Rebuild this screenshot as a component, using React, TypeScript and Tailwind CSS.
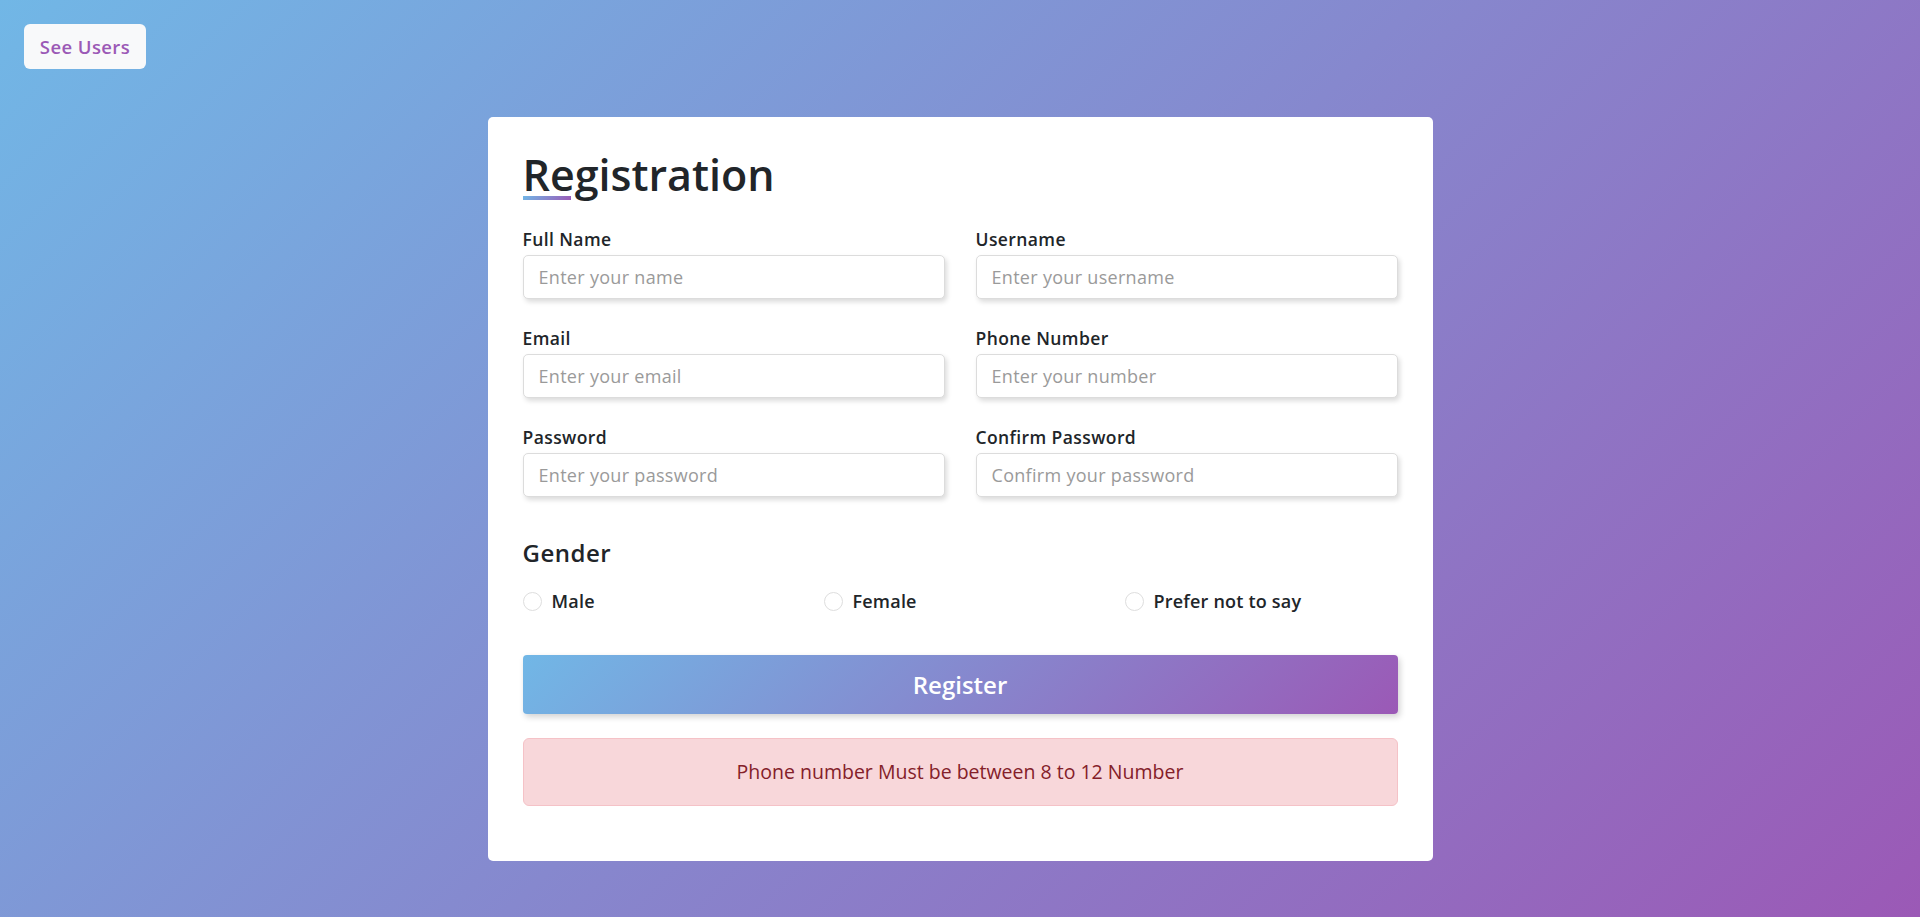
import React from "react";

const font = { fontFamily: '"Open Sans", "Noto Sans", sans-serif' };

function Field({ label, placeholder }: { label: string; placeholder: string }) {
  return (
    <div className="mb-[28px] flex flex-col">
      <label className="mb-[5px] block h-[22px] text-[17.5px] font-semibold leading-[22px] tracking-[0.4px] text-[#212529]">
        {label}
      </label>
      <input
        className="h-[44px] w-full rounded-[5px] border border-[#dcdcdc] bg-white pl-[15px] text-[18px] tracking-[0.3px] text-[#212529] shadow-[2px_3px_5px_rgba(0,0,0,0.14)] outline-none placeholder:text-[#9a9a9a]"
        placeholder={placeholder}
      />
    </div>
  );
}

function Radio({ label }: { label: string }) {
  return (
    <label className="flex h-[24px] items-center">
      <span className="mr-[10px] inline-block h-[19px] w-[19px] rounded-full border border-[#dedede] bg-white" />
      <span className="text-[18px] font-semibold leading-[24px] tracking-[0.2px] text-[#212529]">{label}</span>
    </label>
  );
}

export default function App() {
  return (
    <div
      className="min-h-screen w-full bg-[linear-gradient(135deg,#71b7e6,#9b59b6)] pt-[24px]"
      style={font}
    >
      <div className="pl-[24px]">
        <button className="flex h-[45px] w-[122px] items-center justify-center rounded-[6px] bg-[#f8f9fa] text-[18.5px] font-semibold tracking-[0.4px] text-[#9b59b6]">
          See Users
        </button>
      </div>
      <div className="mx-auto mt-[48px] w-[945px] rounded-[5px] bg-white px-[35px] pb-[55px] pt-[35px]">
        <div className="relative mb-[31px] h-[45px]">
          <h1 className="text-[43px] font-semibold leading-[45px] text-[#212529]">Registration</h1>
          <div className="absolute left-0 top-[44px] h-[4px] w-[48px] bg-[linear-gradient(135deg,#71b7e6,#9b59b6)]" />
        </div>
        <div className="grid grid-cols-2 gap-x-[31px]">
          <Field label="Full Name" placeholder="Enter your name" />
          <Field label="Username" placeholder="Enter your username" />
          <Field label="Email" placeholder="Enter your email" />
          <Field label="Phone Number" placeholder="Enter your number" />
          <Field label="Password" placeholder="Enter your password" />
          <Field label="Confirm Password" placeholder="Confirm your password" />
        </div>
        <div className="mt-[16px] h-[24px] text-[24px] font-semibold leading-[24px] tracking-[0.5px] text-[#212529]">Gender</div>
        <div className="mt-[24px] grid grid-cols-[301px_301px_1fr]">
          <Radio label="Male" />
          <Radio label="Female" />
          <Radio label="Prefer not to say" />
        </div>
        <button className="mt-[42px] flex h-[59px] w-full items-center justify-center rounded-[4px] bg-[linear-gradient(135deg,#71b7e6,#9b59b6)] text-[24px] font-semibold text-white shadow-[2px_3px_6px_rgba(0,0,0,0.18)]">
          Register
        </button>
        <div className="mt-[24px] flex h-[68px] items-center justify-center rounded-[6px] border border-[#f5c2c7] bg-[#f8d7da] text-[19.5px] text-[#842029]">
          Phone number Must be between 8 to 12 Number
        </div>
      </div>
    </div>
  );
}
